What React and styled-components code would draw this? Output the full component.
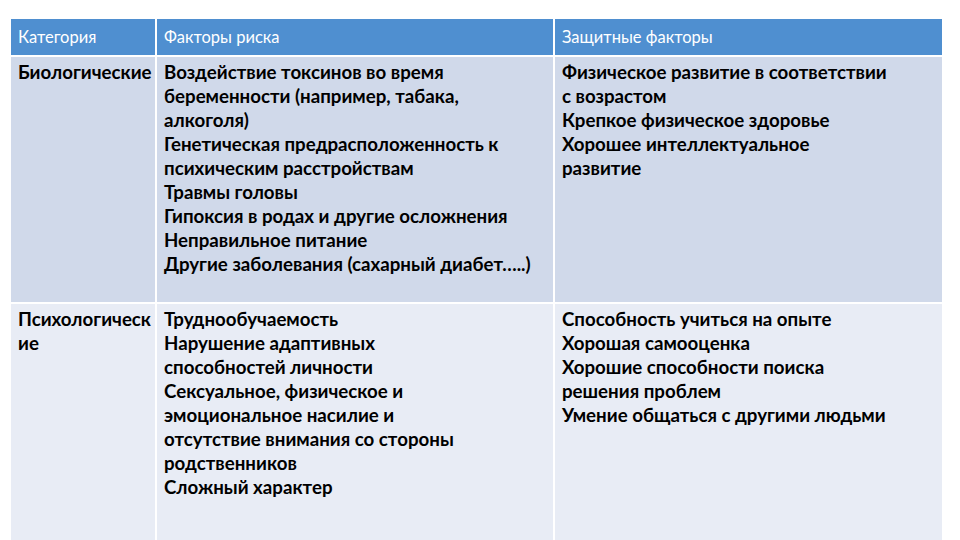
import React from "react";
import styled, { createGlobalStyle } from "styled-components";

// each factor is kept with the line breaks it has on the slide
const rows = [
  {
    category: ["Биологические"],
    risk: [
      ["Воздействие токсинов во время", "беременности (например, табака,", "алкоголя)"],
      ["Генетическая предрасположенность к", "психическим расстройствам"],
      ["Травмы головы"],
      ["Гипоксия в родах и другие осложнения"],
      ["Неправильное питание"],
      ["Другие заболевания (сахарный диабет…..)"],
    ],
    protect: [
      ["Физическое развитие в соответствии", "с возрастом"],
      ["Крепкое физическое здоровье"],
      ["Хорошее интеллектуальное", "развитие"],
    ],
  },
  {
    category: ["Психологическ", "ие"],
    risk: [
      ["Труднообучаемость"],
      ["Нарушение адаптивных", "способностей личности"],
      ["Сексуальное, физическое и", "эмоциональное насилие и", "отсутствие внимания со стороны", "родственников"],
      ["Сложный характер"],
    ],
    protect: [
      ["Способность учиться на опыте"],
      ["Хорошая самооценка"],
      ["Хорошие способности поиска", "решения проблем"],
      ["Умение общаться с другими людьми"],
    ],
  },
];

const Lines = ({ parts }) =>
  parts.map((text, i) => (
    <React.Fragment key={i}>
      {i > 0 && <br />}
      {text}
    </React.Fragment>
  ));

export default function App() {
  return (
    <>
      <Global />
      <Page>
        <Table>
          <HeadCell>Категория</HeadCell>
          <HeadCell>Факторы риска</HeadCell>
          <HeadCell>Защитные факторы</HeadCell>
          {rows.map((row, i) => (
            <React.Fragment key={i}>
              <Cell $odd={i % 2 === 0}>
                <Lines parts={row.category} />
              </Cell>
              <Cell $odd={i % 2 === 0}>
                {row.risk.map((item, j) => (
                  <Line key={j}>
                    <Lines parts={item} />
                  </Line>
                ))}
              </Cell>
              <Cell $odd={i % 2 === 0}>
                {row.protect.map((item, j) => (
                  <Line key={j}>
                    <Lines parts={item} />
                  </Line>
                ))}
              </Cell>
            </React.Fragment>
          ))}
        </Table>
      </Page>
    </>
  );
}

const Global = createGlobalStyle`
  html, body {
    margin: 0;
    background: #fff;
    overflow: hidden;
  }
  body {
    font-family: "Lato", "Open Sans", "Noto Sans", sans-serif;
  }
`;

const Page = styled.div`
  width: 960px;
  height: 540px;
  padding: 19px 18px 0 11px;
  box-sizing: border-box;
  overflow: hidden;
`;

const Table = styled.div`
  display: grid;
  grid-template-columns: 144px 396px 1fr;
  grid-template-rows: 36px 245px 1fr;
  gap: 2px;
  height: 521px;
`;

const HeadCell = styled.div`
  background: #4f8fd0;
  color: #fff;
  font-size: 16.5px;
  display: flex;
  align-items: center;
  padding: 0 7px;
`;

const Cell = styled.div`
  background: ${p => (p.$odd ? "#d0d9ea" : "#e8ecf5")};
  color: #000;
  font-size: 18.7px;
  font-weight: 700;
  line-height: 24px;
  padding: 3px 7px;
  white-space: nowrap;
  overflow: hidden;
`;

const Line = styled.div``;
